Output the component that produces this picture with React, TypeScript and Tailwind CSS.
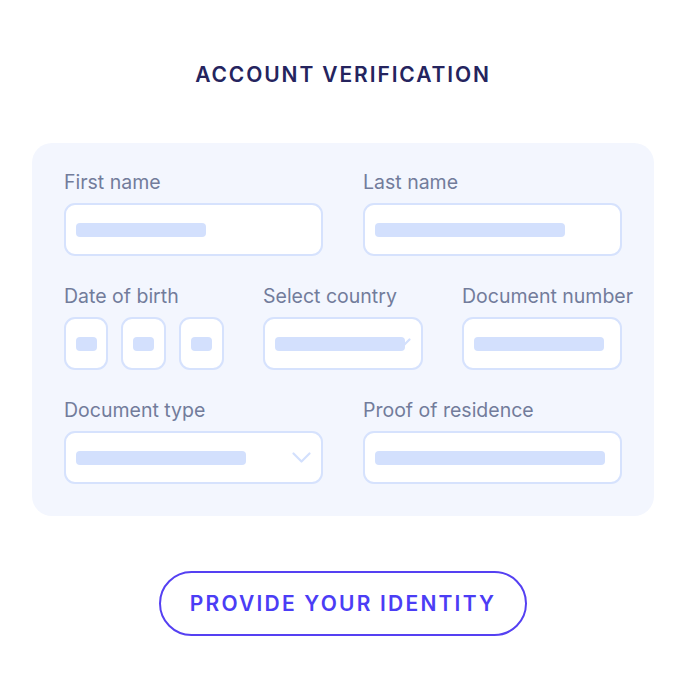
import React from "react";

const Bar = ({ w, h = 14 }: { w: number; h?: number }) => (
  <div className="relative z-10 rounded-[4px] bg-[#d3e0fd]" style={{ width: w, height: h }} />
);

const Chevron = () => (
  <svg className="absolute right-[10px] top-1/2 -translate-y-1/2" width="19" height="12" viewBox="0 0 19 12" fill="none">
    <path d="M1.5 1.5 L9.5 9.5 L17.5 1.5" stroke="#d3e0fd" strokeWidth="2.2" strokeLinecap="round" strokeLinejoin="round" />
  </svg>
);

const Box = ({ children, className = "" }: { children?: React.ReactNode; className?: string }) => (
  <div className={"relative flex h-[53px] items-center rounded-[11px] border-2 border-[#d6e2fd] bg-white pl-[10px] " + className}>
    {children}
  </div>
);

const Label = ({ children }: { children: React.ReactNode }) => (
  <div className="mb-[9px] whitespace-nowrap text-[19.5px] leading-[24px] text-[#727c9b]" style={{ fontFamily: "Inter, sans-serif" }}>
    {children}
  </div>
);

export default function App() {
  return (
    <div className="flex h-[700px] w-[686px] flex-col items-center bg-white" style={{ fontFamily: "Inter, sans-serif" }}>
      <h1 className="mt-[62px] text-[21px] font-semibold leading-[26px] tracking-[0.09em] text-[#25245e]">
        ACCOUNT VERIFICATION
      </h1>
      <div className="ml-[32px] mr-[32px] mt-[55px] w-[622px] self-start rounded-[20px] bg-[#f3f6fe] px-[32px] pb-[32px] pt-[27px]">
        <div className="grid grid-cols-[259px_259px] justify-between">
          <div>
            <Label>First name</Label>
            <Box>
              <Bar w={130} />
            </Box>
          </div>
          <div>
            <Label>Last name</Label>
            <Box>
              <Bar w={190} />
            </Box>
          </div>
        </div>
        <div className="mt-[28px] grid grid-cols-[160px_160px_160px] justify-between">
          <div>
            <Label>Date of birth</Label>
            <div className="flex gap-[13px]">
              <Box className="w-[44px]">
                <Bar w={21} />
              </Box>
              <Box className="w-[45px]">
                <Bar w={21} />
              </Box>
              <Box className="w-[45px]">
                <Bar w={21} />
              </Box>
            </div>
          </div>
          <div>
            <Label>Select country</Label>
            <Box>
              <Chevron />
              <Bar w={130} />
            </Box>
          </div>
          <div>
            <Label>Document number</Label>
            <Box>
              <Bar w={130} />
            </Box>
          </div>
        </div>
        <div className="mt-[28px] grid grid-cols-[259px_259px] justify-between">
          <div>
            <Label>Document type</Label>
            <Box>
              <Chevron />
              <Bar w={170} />
            </Box>
          </div>
          <div>
            <Label>Proof of residence</Label>
            <Box>
              <Bar w={230} />
            </Box>
          </div>
        </div>
      </div>
      <button className="mt-[55px] flex h-[65px] w-[368px] items-center justify-center rounded-full border-2 border-[#5540f2] bg-white text-[21px] font-semibold tracking-[0.105em] text-[#4b3df5]">
        PROVIDE YOUR IDENTITY
      </button>
    </div>
  );
}
